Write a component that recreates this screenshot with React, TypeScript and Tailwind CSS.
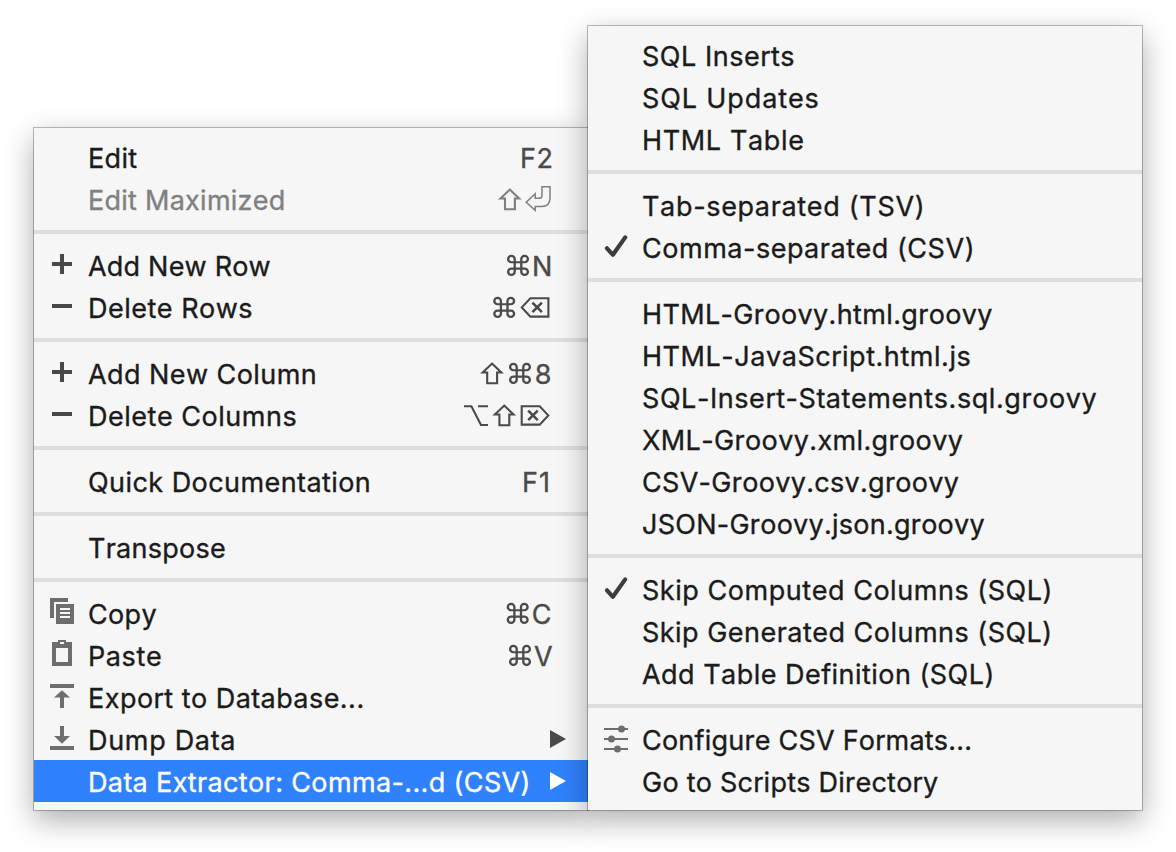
import type { ReactNode } from "react";

type Row = {
  label: string;
  tracking: string;
  icon?: ReactNode;
  trailing?: ReactNode;
  disabled?: boolean;
  selected?: boolean;
};

/* Leading icons, drawn in row coordinates (52 x 42) */

const Icon = ({ children }: { children: ReactNode }) => (
  <svg width="52" height="42" viewBox="0 0 52 42" className="block">
    {children}
  </svg>
);

const Plus = (
  <Icon>
    <path d="M18 18h8v-8h4v8h8v4h-8v8h-4v-8h-8z" fill="#4a4846" />
  </Icon>
);

const Minus = (
  <Icon>
    <path d="M18 18h20v4H18z" fill="#4a4846" />
  </Icon>
);

const Check = (
  <Icon>
    <path
      d="M19 22.3L24.9 28.8L37.2 11.4"
      fill="none"
      stroke="#3d3d3d"
      strokeWidth="4.2"
      strokeLinecap="round"
      strokeLinejoin="round"
    />
  </Icon>
);

const CopyIcon = (
  <Icon>
    <path d="M16 6h18v4H20v16h-4z" fill="#6e6e6e" />
    <path d="M22 12h18v20H22z" fill="#6e6e6e" />
    <path d="M26 16h10v2H26zM26 20h10v2H26zM26 24h10v2H26z" fill="#f6f6f6" />
  </Icon>
);

const PasteIcon = (
  <Icon>
    <path
      fillRule="evenodd"
      d="M18 8h6V6h8v2h6v24H18zM22 14v14h12V14zM26 8v2h4V8z"
      fill="#6e6e6e"
    />
  </Icon>
);

const ExportIcon = (
  <Icon>
    <path d="M16 8h24v4H16zM28 14.2l8 7.4h-6V32h-4V21.6h-6z" fill="#6e6e6e" />
  </Icon>
);

const DumpIcon = (
  <Icon>
    <path d="M16 28h24v4H16zM26 8h4v10h6l-8 7.8l-8-7.8h6z" fill="#6e6e6e" />
  </Icon>
);

const SlidersIcon = (
  <Icon>
    <path d="M16 10h24v2H16zM16 20h24v2H16zM16 30h24v2H16z" fill="#6e6e6e" />
    <circle cx="33.5" cy="11" r="3.5" fill="#6e6e6e" />
    <circle cx="23.5" cy="21" r="3.5" fill="#6e6e6e" />
    <circle cx="29.5" cy="31" r="3.5" fill="#6e6e6e" />
  </Icon>
);

/* Keyboard symbols */

const Command = ({ x }: { x: number }) => (
  <path
    transform={`translate(${x - 2.2} 8.7) scale(1.1 1.06)`}
    d="M15 6v12a3 3 0 1 0 3-3H6a3 3 0 1 0 3 3V6a3 3 0 1 0-3 3h12a3 3 0 1 0-3-3"
    strokeWidth="2.1"
  />
);

const Shift = ({ x }: { x: number }) => (
  <path
    transform={`translate(${x} 10)`}
    d="M11.5 1.6L20.8 10.5H16.6V21.2H6.7V10.5H2.2Z"
    strokeWidth="2.1"
  />
);

const Return = ({ x }: { x: number }) => (
  <path
    transform={`translate(${x} 8)`}
    d="M16.8.8H24.8V12Q24.8 20.5 16.5 20.5H10V24.3L1 16.2L10 7.8V12.3H14Q16.8 12.3 16.8 9.5Z"
    strokeWidth="1.5"
  />
);

const Backspace = ({ x }: { x: number }) => (
  <g transform={`translate(${x} 11)`}>
    <path d="M1.4 10.4L10 1.2H28V19.6H10Z" />
    <path d="M12 5.7L21.5 15.2M21.5 5.7L12 15.2" strokeWidth="2.6" />
  </g>
);

const ForwardDelete = ({ x }: { x: number }) => (
  <g transform={`translate(${x} 11)`}>
    <path d="M1 1.2H19L27.6 10.4L19 19.6H1Z" />
    <path d="M7.5 5.7L17 15.2M17 5.7L7.5 15.2" strokeWidth="2.6" />
  </g>
);

const Option = ({ x }: { x: number }) => (
  <path transform={`translate(${x} 11)`} d="M0 1.3H7.4L17 20H24M14 1.3H24" />
);

const Keys = ({ width, children, text }: { width: number; children?: ReactNode; text?: string }) => (
  <div className="flex h-[42px] w-[128px] shrink-0">
    <svg
      width={width}
      height="42"
      viewBox={`0 0 ${width} 42`}
      className="shrink-0"
      fill="none"
      stroke="currentColor"
      strokeWidth="2.1"
    >
      {children}
    </svg>
    {text && <span>{text}</span>}
  </div>
);

const Arrow = (
  <svg width="38" height="42" viewBox="0 0 38 42" className="shrink-0" fill="currentColor">
    <path d="M0 12L16 21L0 30Z" />
  </svg>
);

const leftMenu: Row[][] = [
  [
    {
      label: "Edit",
      tracking: "tracking-[0.35px]",
      trailing: (
        <div className="w-[128px] shrink-0 pl-[60px] tracking-[0.5px]">F2</div>
      ),
    },
    {
      label: "Edit Maximized",
      tracking: "tracking-[0.26px]",
      disabled: true,
      trailing: (
        <Keys width={92}>
          <Shift x={38.3} />
          <Return x={65.2} />
        </Keys>
      ),
    },
  ],
  [
    {
      label: "Add New Row",
      tracking: "tracking-[0.2px]",
      icon: Plus,
      trailing: (
        <Keys width={72} text="N">
          <Command x={47} />
        </Keys>
      ),
    },
    {
      label: "Delete Rows",
      tracking: "tracking-[0.5px]",
      icon: Minus,
      trailing: (
        <Keys width={92}>
          <Command x={33.2} />
          <Backspace x={60.4} />
        </Keys>
      ),
    },
  ],
  [
    {
      label: "Add New Column",
      tracking: "tracking-[0.44px]",
      icon: Plus,
      trailing: (
        <Keys width={74.7} text="8">
          <Shift x={20.5} />
          <Command x={49} />
        </Keys>
      ),
    },
    {
      label: "Delete Columns",
      tracking: "tracking-[0.52px]",
      icon: Minus,
      trailing: (
        <Keys width={92}>
          <Option x={4} />
          <Shift x={32.7} />
          <ForwardDelete x={60.7} />
        </Keys>
      ),
    },
  ],
  [
    {
      label: "Quick Documentation",
      tracking: "tracking-[0.44px]",
      trailing: (
        <div className="w-[128px] shrink-0 pl-[62px] tracking-[1px]">F1</div>
      ),
    },
  ],
  [{ label: "Transpose", tracking: "tracking-[0.26px]" }],
  [
    {
      label: "Copy",
      tracking: "tracking-[0.35px]",
      icon: CopyIcon,
      trailing: (
        <Keys width={71.7} text="C">
          <Command x={46.7} />
        </Keys>
      ),
    },
    {
      label: "Paste",
      tracking: "tracking-[0.6px]",
      icon: PasteIcon,
      trailing: (
        <Keys width={74} text="V">
          <Command x={49} />
        </Keys>
      ),
    },
    { label: "Export to Database...", tracking: "tracking-[0.48px]", icon: ExportIcon },
    { label: "Dump Data", tracking: "tracking-[0.68px]", icon: DumpIcon, trailing: Arrow },
    {
      label: "Data Extractor: Comma-...d (CSV)",
      tracking: "tracking-[0.37px]",
      selected: true,
      trailing: Arrow,
    },
  ],
];

const rightMenu: Row[][] = [
  [
    { label: "SQL Inserts", tracking: "tracking-[0.53px]" },
    { label: "SQL Updates", tracking: "tracking-[0.88px]" },
    { label: "HTML Table", tracking: "tracking-[0.64px]" },
  ],
  [
    { label: "Tab-separated (TSV)", tracking: "tracking-[0.68px]" },
    { label: "Comma-separated (CSV)", tracking: "tracking-[0.53px]", icon: Check },
  ],
  [
    { label: "HTML-Groovy.html.groovy", tracking: "tracking-[0.36px]" },
    { label: "HTML-JavaScript.html.js", tracking: "tracking-[0.55px]" },
    { label: "SQL-Insert-Statements.sql.groovy", tracking: "tracking-[0.57px]" },
    { label: "XML-Groovy.xml.groovy", tracking: "tracking-[0.37px]" },
    { label: "CSV-Groovy.csv.groovy", tracking: "tracking-[0.3px]" },
    { label: "JSON-Groovy.json.groovy", tracking: "tracking-[0.25px]" },
  ],
  [
    { label: "Skip Computed Columns (SQL)", tracking: "tracking-[0.54px]", icon: Check },
    { label: "Skip Generated Columns (SQL)", tracking: "tracking-[0.48px]" },
    { label: "Add Table Definition (SQL)", tracking: "tracking-[0.47px]" },
  ],
  [
    { label: "Configure CSV Formats...", tracking: "tracking-[0.21px]", icon: SlidersIcon },
    { label: "Go to Scripts Directory", tracking: "tracking-[0.24px]" },
  ],
];

function MenuRow({ row }: { row: Row }) {
  const labelColor = row.selected
    ? "text-white"
    : row.disabled
      ? "text-[#808080]"
      : "text-[#1b1b1b]";
  const trailingColor = row.selected
    ? "text-white"
    : row.disabled
      ? "text-[#7f7f7f]"
      : "text-[#4a4a4a]";
  return (
    <div
      role="menuitem"
      className={`flex h-[42px] leading-[45px] whitespace-nowrap ${row.selected ? "bg-[#2f82fc]" : ""}`}
    >
      <div className="w-[54px] shrink-0">{row.icon}</div>
      <span className={`min-w-0 flex-1 ${labelColor} ${row.tracking}`}>{row.label}</span>
      <div className={`flex shrink-0 ${trailingColor}`}>{row.trailing}</div>
    </div>
  );
}

function Menu({ groups }: { groups: Row[][] }) {
  return (
    <div
      role="menu"
      className="w-[554px] shrink-0 bg-[#f6f6f6] py-2 shadow-[0_0_0_1px_rgba(0,0,0,0.26),0_10px_28px_rgba(0,0,0,0.33)]"
    >
      {groups.map((group, i) => (
        <div key={i}>
          {i > 0 && (
            <div className="flex h-6 items-center">
              <div className="h-1 w-full bg-[#dedede]" />
            </div>
          )}
          {group.map((row) => (
            <MenuRow key={row.label} row={row} />
          ))}
        </div>
      ))}
    </div>
  );
}

export default function App() {
  return (
    <div className="h-[852px] w-[1176px] overflow-hidden bg-white font-['Inter',sans-serif] text-[27px] [-webkit-text-stroke:0.35px_currentColor] [font-kerning:none]">
      <div className="flex h-[810px] items-end pl-[34px]">
        <Menu groups={leftMenu} />
        <Menu groups={rightMenu} />
      </div>
    </div>
  );
}
